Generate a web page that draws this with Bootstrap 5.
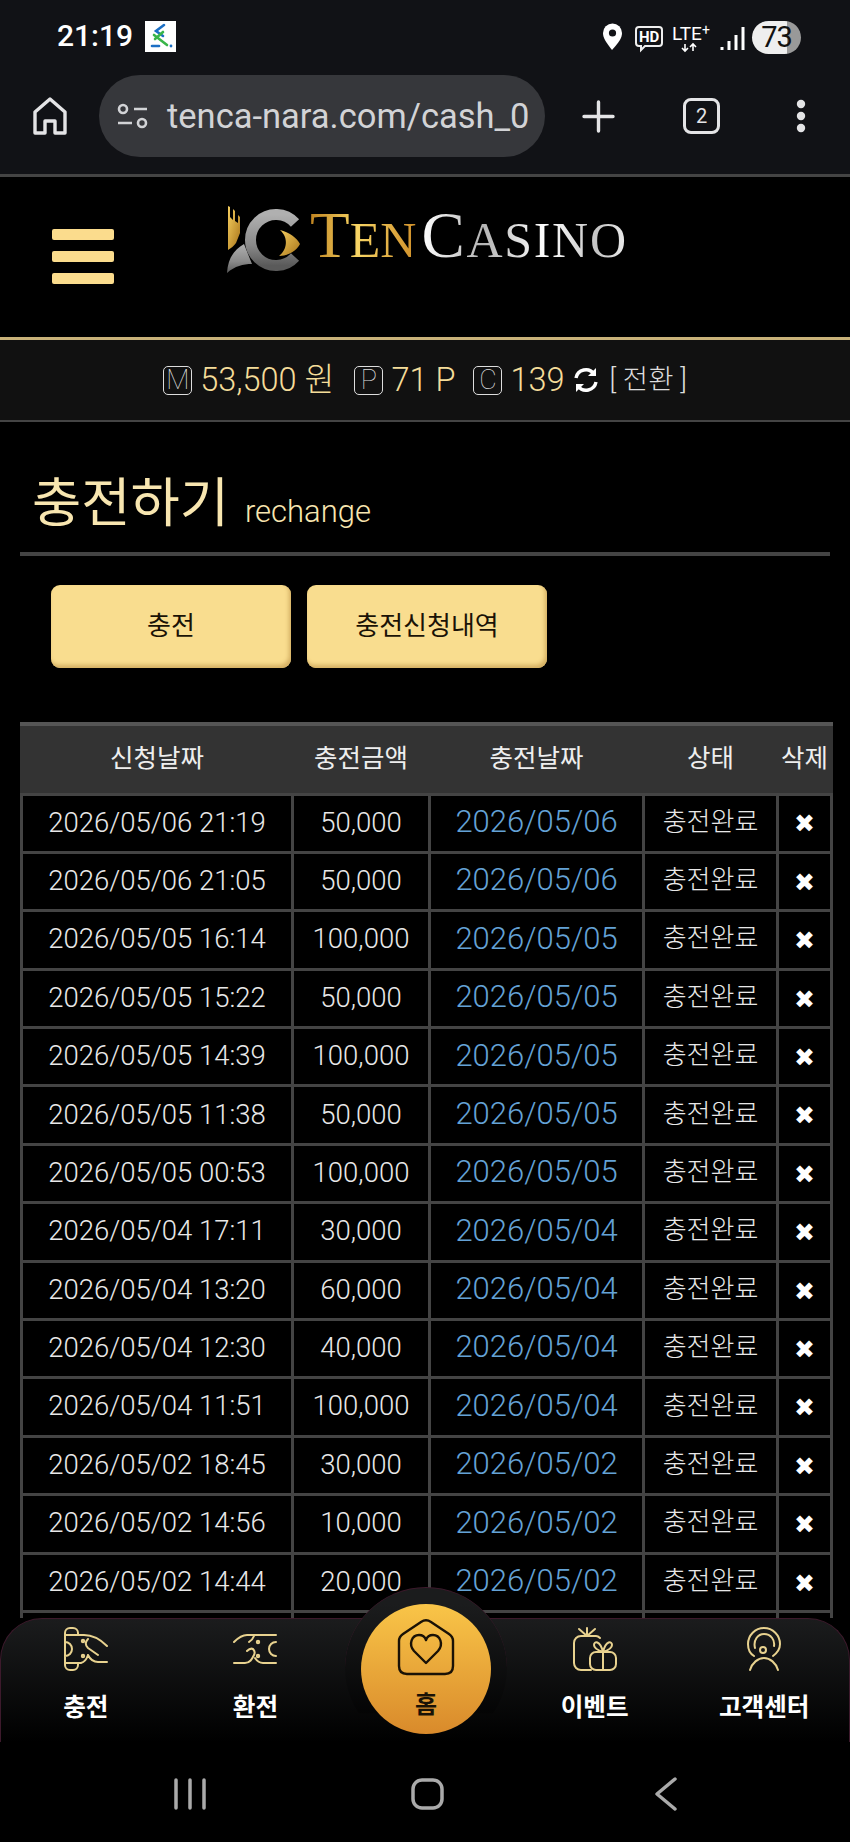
<!DOCTYPE html>
<html lang="ko">
<head>
  <meta charset="UTF-8" />
  <title>충전하기</title>
  <link href="https://cdn.jsdelivr.net/npm/bootstrap@5.3.0/dist/css/bootstrap.min.css" rel="stylesheet" />
  <style>
    html, body { height: 1842px; overflow: hidden; }
    body { width: 850px; background: #000; color: #eee; font-family: Roboto, "Noto Sans CJK KR", sans-serif; position: relative; }

    /* phone + browser chrome */
    .phone-top { height: 177px; background: #111216; border-bottom: 3px solid #444; }
    .status-row { height: 75px; padding: 21px 49px 0 57px; }
    .clock { font-size: 30px; font-weight: 500; line-height: 30px; color: #fff; margin-right: 12px; }
    .app-ico { width: 31px; height: 31px; background: #fff; }
    .batt { width: 49px; height: 33px; border-radius: 17px; background: linear-gradient(90deg, #eee 0, #eee 35px, #999 35px); color: #111; font-size: 29px; line-height: 33px; text-align: center; letter-spacing: -1px; }
    .url-row { height: 82px; padding-left: 33px; }
    .url-pill { width: 446px; height: 82px; margin-left: 32px; margin-right: 37px; border-radius: 41px; background: #36373b; padding: 0 18px; }
    .url-txt { font-size: 34.5px; color: #d2d3d6; white-space: nowrap; margin-left: 19px; line-height: 82px; }
    .tab-box { width: 37px; height: 36px; border: 3px solid #e4e4e6; border-radius: 8px; font-size: 20px; line-height: 30px; text-align: center; color: #e4e4e6; margin: 0 76px 0 68px; }

    /* site header */
    .site-head { height: 160px; padding-left: 52px; }
    .burger { width: 62px; margin-right: 113px; margin-top: -2px; }
    .burger i { display: block; height: 11px; margin-bottom: 11px; background: #fbdc8d; border-radius: 2px; }
    .burger i:last-child { margin-bottom: 0; }
    .logo-wrap { margin-top: -40px; }
    .logo-txt { font-family: "Liberation Serif", serif; margin-left: 9px; margin-bottom: -1px; white-space: nowrap; display: flex; align-items: baseline; }
    .logo-txt .sm { font-size: 50px; }
    .logo-ten, .logo-cas { display: inline-block; font-size: 65px; line-height: 70px; -webkit-background-clip: text; background-clip: text; color: transparent; }
    .logo-ten { background-image: linear-gradient(90deg, #c08420, #f8d565 45%, #d0902a); }
    .logo-cas { background-image: linear-gradient(90deg, #fff, #b4b4b4 30%, #fff 60%, #c4c4c4 85%, #eee); margin-left: 5px; letter-spacing: 1.7px; }

    .money-bar { height: 85px; background: #111; border-top: 3px solid #c9b27a; border-bottom: 2px solid #444; color: #f5dd9a; font-size: 32.5px; font-weight: 300; }
    .mbox { width: 29px; height: 29px; border: 1px solid #ddd; border-radius: 5px; color: #ddd; font-size: 27px; line-height: 27px; text-align: center; font-weight: 100; margin-right: 8px; }
    .mgap { margin-right: 20px; }
    .mgap-b { margin-right: 18px; }
    .swap-txt { font-size: 27.5px; color: #ddd; margin-left: 11px; }

    .page-title { margin: 0 20px; height: 134px; border-bottom: 4px solid #444; padding: 48px 0 0 12px; color: #f8e6b0; font-size: 53.5px; font-weight: 400; line-height: 68px; }
    .page-title span { font-size: 31px; margin-left: 16px; font-weight: 300; }

    .act-row { padding: 29px 0 0 51px; gap: 16px; }
    .act-btn { width: 240px; height: 83px; line-height: 83px; padding: 0; border: 0; border-radius: 9px; background: #f9dd8f; color: #1a1206; font-size: 26px; box-shadow: inset -2px -3px 4px #d3ae62; }

    .hist-wrap { margin: 54px 20px 0; }
    .hist-table { table-layout: fixed; width: 810px; margin: 0; border-collapse: collapse; }
    .hist-table>:not(caption)>*>* { background: #000; color: #e8e8e8; padding: 0; border: 3px solid #444; text-align: center; vertical-align: middle; box-shadow: none; }
    .hist-table>thead>tr>th { background: #333; height: 70px; padding-bottom: 2px; font-size: 25.5px; font-weight: 400; color: #eee; border: 3px solid #333; border-top: 4px solid #555; border-bottom: 3px solid #444; }
    .hist-table>tbody>tr>td { height: 58.4px; padding-bottom: 2px; font-size: 27.5px; font-weight: 300; }
    .c1 { width: 271px; } .c2 { width: 137px; } .c3 { width: 214px; } .c4 { width: 134px; } .c5 { width: 54px; }
    .hist-table>tbody>tr>td.blue-date { color: #64a2d6; font-size: 31px; }
    .hist-table>tbody>tr>td.stat { font-size: 26px; }
    .hist-table>tbody>tr>td.del { font-family: "DejaVu Sans", sans-serif; font-size: 25px; color: #fff; font-weight: 700; padding: 2px 0 0; }

    /* bottom bars, lie over the table */
    .bottom-wrap { position: absolute; left: 0; right: 0; bottom: 0; height: 224px; background: #000; }
    .tab-bar { height: 124px; border: 1px solid #3d1a2c; border-bottom: 0; border-radius: 42px 42px 0 0; background: linear-gradient(#1b1c1d, #000); position: relative; }
    .tab-item { width: 170px; padding-top: 8px; color: #fff; font-size: 24.6px; font-weight: 700; line-height: 30px; font-family: "Noto Sans CJK KR", sans-serif; }
    .tab-item svg { display: block; margin: 0 auto 19px; height: 44px; fill: none; stroke: #e8d28f; stroke-width: 2; stroke-linecap: round; stroke-linejoin: round; }
    .bubble { position: absolute; left: 344px; top: -32px; width: 162px; height: 162px; border-radius: 50%; background: linear-gradient(#1b1c1d 10%, #000 90%); border-top: 1px solid #3d1a2c; clip-path: inset(0 0 22% 0); }
    .home-disc { position: absolute; left: 360px; top: -15px; width: 130px; height: 130px; border-radius: 50%; background: linear-gradient(#f9c548, #d98a2b); color: #1a1206; text-align: center; font-size: 24px; font-weight: 700; font-family: "Noto Sans CJK KR", sans-serif; line-height: 28px; padding-top: 15px; }
    .home-disc svg { display: block; margin: 0 auto 12px; width: 58px; height: 58px; fill: none; stroke: #1a1206; stroke-width: 2.4; stroke-linejoin: round; }
    .sys-nav { height: 100px; }
    .sys-nav svg { position: absolute; left: 0; top: 124px; width: 850px; height: 100px; fill: none; stroke: #aaa; stroke-width: 3.5; stroke-linecap: round; stroke-linejoin: round; }
  </style>
</head>
<body>

<!-- phone status + browser bar -->
<div class="phone-top">
  <div class="status-row d-flex align-items-start">
    <span class="clock">21:19</span>
    <span class="app-ico d-block">
      <svg width="31" height="31" viewBox="0 0 31 31" fill="none" stroke-width="2.6" stroke-linecap="round">
        <path d="M19 4 11 10l7 5" stroke="#1c6fc4"/><path d="M9 14l13 10" stroke="#39b54a"/><path d="M18 11l-8 7" stroke="#39b54a"/>
        <path d="M7 25h7" stroke="#1c6fc4"/><circle cx="26" cy="25" r="1.4" fill="#1c6fc4"/>
      </svg>
    </span>
    <span class="flex-grow-1"></span>
    <svg width="150" height="33" viewBox="0 0 150 33">
      <path d="M10 28C4 20 1 16 1 11a9.5 9.5 0 0 1 19 0c0 5-3 9-10 17z" fill="#fff" transform="translate(0 1)"/><circle cx="10.5" cy="12" r="3.6" fill="#111216"/>
      <path d="M37 6h20a3 3 0 0 1 3 3v13a3 3 0 0 1-3 3H43l-4 4v-4h-2a3 3 0 0 1-3-3V9a3 3 0 0 1 3-3z" fill="none" stroke="#eee" stroke-width="2"/>
      <text x="37" y="21" font-size="15" font-weight="700" fill="#fff" font-family="Roboto">HD</text>
      <text x="70" y="19" font-size="19" fill="#fff" font-family="Roboto">LTE</text><text x="100" y="14" font-size="14" fill="#fff" font-family="Roboto">+</text>
      <path d="M83 23v7M80 27l3 3 3-3M91 30v-7M88 26l3-3 3 3" stroke="#fff" stroke-width="1.6" fill="none"/>
      <path d="M120 26v3M127 20v9M134 14v15M141 6v23" stroke="#fff" stroke-width="3" fill="none"/>
    </svg>
    <span class="batt d-block">73</span>
  </div>
  <div class="url-row d-flex align-items-center">
    <svg width="34" height="38" viewBox="0 0 34 38" fill="none" stroke="#e4e4e6" stroke-width="3.4" stroke-linejoin="round"><path d="M2 36V15L17 2l15 13v21H22V24H12v12z"/></svg>
    <div class="url-pill d-flex align-items-center">
      <svg width="31" height="26" viewBox="0 0 31 26" fill="none" stroke="#d2d3d6" stroke-width="2.6" class="flex-shrink-0"><circle cx="6" cy="6" r="4"/><path d="M17 6h13M1 20h14"/><circle cx="25" cy="20" r="4"/></svg>
      <div class="url-txt">tenca-nara.com/cash_0</div>
    </div>
    <svg width="33" height="33" viewBox="0 0 33 33" stroke="#e4e4e6" stroke-width="3.4" stroke-linecap="round"><path d="M16.5 2v29M2 16.5h29"/></svg>
    <div class="tab-box">2</div>
    <svg width="10" height="34" viewBox="0 0 10 34" fill="#e4e4e6"><circle cx="5" cy="5" r="4.2"/><circle cx="5" cy="17" r="4.2"/><circle cx="5" cy="29" r="4.2"/></svg>
  </div>
</div>

<!-- site header -->
<div class="site-head d-flex align-items-center">
  <div class="burger"><i></i><i></i><i></i></div>
  <div class="logo-wrap d-flex align-items-end">
    <svg width="74" height="68" viewBox="0 0 74 68">
      <defs>
        <linearGradient id="ringG" x1="0" y1="0" x2="0" y2="1"><stop offset="0" stop-color="#b0b0b0"/><stop offset=".6" stop-color="#8a8a8a"/><stop offset="1" stop-color="#5a5a5a"/></linearGradient>
        <linearGradient id="goldG" x1="0" y1="0" x2="1" y2="1"><stop offset="0" stop-color="#f6cf5f"/><stop offset="1" stop-color="#a8741a"/></linearGradient>
      </defs>
      <path d="M0 67C1 52 7 44 17 38l8 20C16 58 8 60 0 67z" fill="url(#ringG)"/>
      <path d="M68 17A25.5 25.5 0 1 0 68 51" fill="none" stroke="url(#ringG)" stroke-width="11"/>
      <path d="M1 0l2 1v10l3 3V3l2 2v10l3 2V9l2 2v16l-4 10c-2 3-5 5-8 7z" fill="url(#goldG)"/>
      <path d="M53 24C62 26 70 32 73 38 70 44 62 50 52 50 60 44 62 32 53 24z" fill="url(#goldG)"/>
    </svg>
    <div class="logo-txt"><span class="logo-ten">T<span class="sm">EN</span></span><span class="logo-cas">C<span class="sm">ASINO</span></span></div>
  </div>
</div>

<!-- balance -->
<div class="money-bar d-flex align-items-center justify-content-center">
  <span class="mbox">M</span><span class="mgap">53,500 원</span>
  <span class="mbox">P</span><span class="mgap-b">71 P</span>
  <span class="mbox">C</span><span class="me-2">139</span>
  <svg width="26" height="26" viewBox="0 0 26 26" fill="none" stroke="#fff" stroke-width="3.4"><path d="M3 11a10 10 0 0 1 18-4M23 15a10 10 0 0 1-18 4"/><path d="M23 1v8h-8zM3 25v-8h8z" fill="#fff" stroke="none"/></svg>
  <span class="swap-txt">[ 전환 ]</span>
</div>

<div class="page-title">충전하기<span>rechange</span></div>

<div class="act-row d-flex">
  <a class="btn act-btn" href="#">충전</a>
  <a class="btn act-btn" href="#">충전신청내역</a>
</div>

<div class="hist-wrap">
  <table class="table hist-table">
    <colgroup><col class="c1"><col class="c2"><col class="c3"><col class="c4"><col class="c5"></colgroup>
    <thead><tr><th>신청날짜</th><th>충전금액</th><th>충전날짜</th><th>상태</th><th>삭제</th></tr></thead>
    <tbody id="histRows"></tbody>
  </table>
</div>

<!-- bottom tab bar + android nav -->
<div class="bottom-wrap">
  <div class="tab-bar d-flex text-center">
    <div class="tab-item">
      <svg width="44" viewBox="0 0 44 44"><path d="M1 7v30M1 7V6a5 5 0 0 1 5-5h3a5 5 0 0 1 5 5v1M1 37v1a5 5 0 0 0 5 5h3a5 5 0 0 0 5-5v-1M1 15a7 7 0 0 1 0 14"/><path d="M1 8h19c8 0 15 3 23 11M1 36h16c4-1 6-5 7-8M24 12c-3 3-3 6 0 9l10 7M24 28c2 4 5 7 10 7h9"/><circle cx="19" cy="14" r="1.2"/><circle cx="19" cy="29" r="1.2"/></svg>
      충전
    </div>
    <div class="tab-item">
      <svg width="44" viewBox="0 0 44 44"><path d="M1 15c4-4 8-7 13-7h29M1 36h11c5 0 7-4 9-8 1-2 1-4-1-6-2-1-4 0-6 2M21 9c-1 3-2 4-5 6M22 31c2 3 4 5 8 5h13M43 15a7 7 0 0 0 0 14"/><circle cx="25" cy="15" r="1.2"/><circle cx="25" cy="29" r="1.2"/></svg>
      환전
    </div>
    <div class="tab-item"></div>
    <div class="tab-item">
      <svg width="44" viewBox="0 0 44 44"><path d="M14 9V1M14 9L6 2M14 9l8-7M27 11c-1-1-2-2-4-2H8a7 7 0 0 0-7 7v20a7 7 0 0 0 7 7h10"/><rect x="17" y="25" width="26" height="18" rx="6"/><path d="M30 25v18M30 25c-3-1-9-3-9-7s6-5 9 7zM30 25c3-1 9-3 9-7s-6-5-9 7z"/></svg>
      이벤트
    </div>
    <div class="tab-item">
      <svg width="34" viewBox="0 0 34 44"><path d="M7 29C2 26 1 21 1 17a16 16 0 0 1 32 0c0 5-3 9-7 12"/><path d="M8 21c-2-8 3-14 9-14 7 0 11 6 10 12"/><circle cx="16" cy="23" r="3"/><path d="M3 43c2-7 8-12 14-12s12 5 14 12"/></svg>
      고객센터
    </div>
    <div class="bubble"></div>
    <div class="home-disc">
      <svg viewBox="0 0 58 58"><path d="M2 22c0-3 1-5 4-7L24 3c3-2 7-2 10 0l18 12c3 2 4 4 4 7v25c0 5-3 8-8 8H10c-5 0-8-3-8-8z"/><path d="M29 44L17 32c-6-7-2-16 5-16 3 0 6 2 7 5 1-3 4-5 7-5 7 0 11 9 5 16z"/></svg>
      홈
    </div>
  </div>
  <div class="sys-nav">
    <svg viewBox="0 0 850 100">
      <path d="M176 38v28M190 38v28M204 38v28"/>
      <rect x="413" y="38" width="29" height="28" rx="9"/>
      <path d="M675 37l-18 15 18 15"/>
    </svg>
  </div>
</div>

<script src="https://cdn.jsdelivr.net/npm/bootstrap@5.3.0/dist/js/bootstrap.bundle.min.js"></script>
<script>
  const rows = [
    ['2026/05/06 21:19', '50,000', '2026/05/06'],
    ['2026/05/06 21:05', '50,000', '2026/05/06'],
    ['2026/05/05 16:14', '100,000', '2026/05/05'],
    ['2026/05/05 15:22', '50,000', '2026/05/05'],
    ['2026/05/05 14:39', '100,000', '2026/05/05'],
    ['2026/05/05 11:38', '50,000', '2026/05/05'],
    ['2026/05/05 00:53', '100,000', '2026/05/05'],
    ['2026/05/04 17:11', '30,000', '2026/05/04'],
    ['2026/05/04 13:20', '60,000', '2026/05/04'],
    ['2026/05/04 12:30', '40,000', '2026/05/04'],
    ['2026/05/04 11:51', '100,000', '2026/05/04'],
    ['2026/05/02 18:45', '30,000', '2026/05/02'],
    ['2026/05/02 14:56', '10,000', '2026/05/02'],
    ['2026/05/02 14:44', '20,000', '2026/05/02']
  ];
  const tbody = document.getElementById('histRows');
  rows.forEach(r => {
    tbody.insertAdjacentHTML('beforeend',
      `<tr><td>${r[0]}</td><td>${r[1]}</td><td class="blue-date">${r[2]}</td><td class="stat">충전완료</td><td class="del">✖</td></tr>`);
  });
  // the next row is cut off by the tab bar
  tbody.insertAdjacentHTML('beforeend', '<tr><td></td><td></td><td></td><td></td><td></td></tr>');
</script>
</body>
</html>
